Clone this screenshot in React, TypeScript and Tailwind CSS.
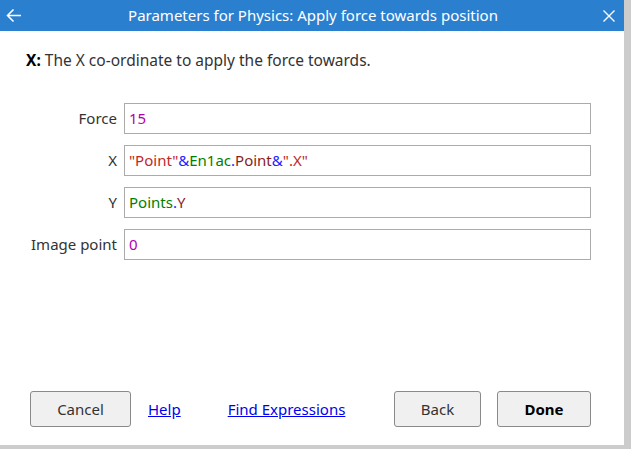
import React from 'react';

const font = { fontFamily: '"Noto Sans", "Open Sans", sans-serif' };

function Field({ label, children }: { label: string; children: React.ReactNode }) {
  return (
    <div className="flex items-center h-[31px]">
      <div className="w-[117px] text-right text-[15px] text-[#333333] whitespace-nowrap">{label}</div>
      <div className="ml-[7px] w-[467px] h-[31px] border border-[#ababab] flex items-center px-[4px] text-[15px]">
        {children}
      </div>
    </div>
  );
}

export default function App() {
  return (
    <div className="w-[631px] h-[449px] bg-[#cccccc] overflow-hidden" style={font}>
      <div className="w-[624px] h-[445px] bg-white flex flex-col">
        <div className="h-[31px] bg-[#2b7fcf] flex items-center text-white relative">
          <svg className="absolute left-[6px] top-[8px]" width="16" height="15" viewBox="0 0 16 15" fill="none">
            <path d="M15 7.5H1.5M7.5 1.5L1.5 7.5L7.5 13.5" stroke="white" strokeWidth="1.6" />
          </svg>
          <div className="flex-1 text-center text-[15px] pl-[2px]">Parameters for Physics: Apply force towards position</div>
          <svg className="absolute left-[603px] top-[10px]" width="12" height="12" viewBox="0 0 12 12" fill="none">
            <path d="M0.5 0.5L11.5 11.5M11.5 0.5L0.5 11.5" stroke="white" strokeWidth="1.4" />
          </svg>
        </div>

        <div className="pl-[26px] pt-[19px] text-[15.5px] text-[#333333] leading-[20px]">
          <span className="font-bold text-black">X:</span> The X co-ordinate to apply the force towards.
        </div>

        <div className="mt-[33px] flex flex-col gap-[11px]">
          <Field label="Force">
            <span className="text-[#b000b0]">15</span>
          </Field>
          <Field label="X">
            <span className="text-[#c0282b]">"Point"</span>
            <span className="text-[#2222ff]">&amp;</span>
            <span className="text-[#008000]">En1ac</span>
            <span className="text-[#2222ff]">.</span>
            <span className="text-[#8b1c1c]">Point</span>
            <span className="text-[#2222ff]">&amp;</span>
            <span className="text-[#c0282b]">".X"</span>
          </Field>
          <Field label="Y">
            <span className="text-[#008000]">Points</span>
            <span className="text-[#2222ff]">.</span>
            <span className="text-[#8b1c1c]">Y</span>
          </Field>
          <Field label="Image point">
            <span className="text-[#b000b0]">0</span>
          </Field>
        </div>

        <div className="mt-auto mb-[18px] flex items-center pl-[30px] text-[15px]">
          <button className="w-[101px] h-[36px] bg-[#f0f0f0] border border-[#8a8a8a] rounded-[3px] text-[#333333]">Cancel</button>
          <a className="ml-[17px] text-[#0000ee] underline cursor-pointer">Help</a>
          <a className="ml-[47px] text-[#0000ee] underline cursor-pointer">Find Expressions</a>
          <button className="ml-auto w-[87px] h-[36px] bg-[#f0f0f0] border border-[#8a8a8a] rounded-[3px] text-[#333333]">Back</button>
          <button className="ml-[16px] mr-[33px] w-[94px] h-[36px] bg-[#f0f0f0] border border-[#8a8a8a] rounded-[3px] font-bold text-black">Done</button>
        </div>
      </div>
    </div>
  );
}
